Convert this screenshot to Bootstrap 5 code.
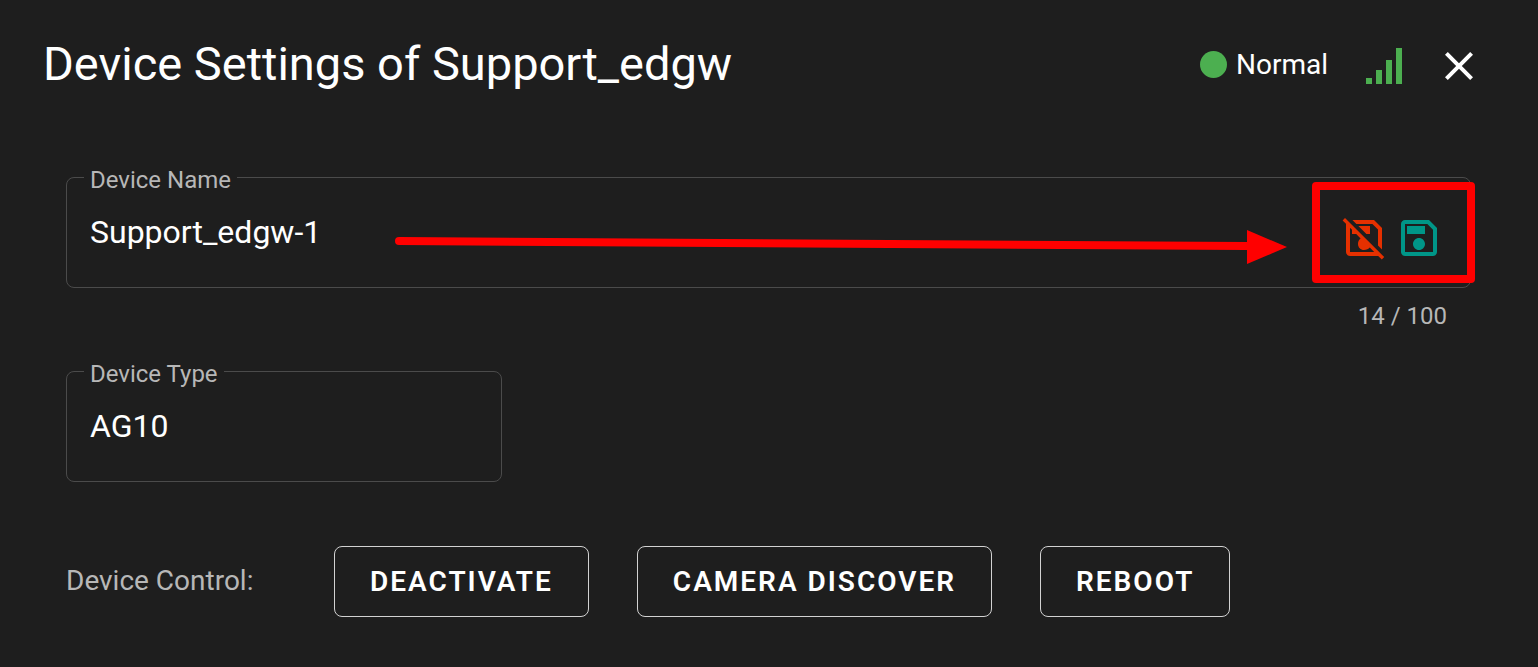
<!DOCTYPE html>
<html lang="en">
<head>
<meta charset="utf-8">
<meta name="viewport" content="width=device-width, initial-scale=1">
<title>Device Settings</title>
<link href="https://cdn.jsdelivr.net/npm/bootstrap@5.3.0/dist/css/bootstrap.min.css" rel="stylesheet">
<style>
  body { background: #1e1e1e; color: #fff; font-family: Roboto, sans-serif; }
  .settings-head { padding: 40px 55px 0 43px; }
  .settings-title { font-size: 47px; line-height: 48px; padding-bottom: 3px; }
  .status { font-size: 28px; line-height: 40px; gap: 9px; padding-bottom: 2px; }
  .status-dot { width: 27px; height: 27px; background: #4caf50; }
  .signal { margin-left: 38px; }
  .icon-btn { background: none; border: 0; padding: 0; line-height: 0; color: inherit; }
  .close-btn { margin-left: 32px; }
  .settings-body { padding: 86px 67px 48px 66px; }
  .field { height: 111px; border: 1px solid #4b4b4b; border-radius: 8px; }
  .field-label { top: -14px; left: 17px; padding: 0 6px; background: #1e1e1e; color: #b7b7b7; font-size: 24px; line-height: 32px; }
  .field-input, .field-input:focus { height: 109px; padding: 0 23px 2px; background: transparent; border: 0; color: #fff; font-size: 32px; line-height: 40px; box-shadow: none; }
  .counter { margin: 8px 24px 35px 0; color: #b7b7b7; font-size: 24px; line-height: 40px; }
  .arrow { left: 328px; right: 183px; top: 52px; height: 34px; pointer-events: none; }
  .arrow-shaft { height: 14px; margin-top: 6px; min-width: 0; overflow: visible; }
  .actions { top: 4px; right: -5px; height: 101px; padding: 10px 24px 0 20px; gap: 7px; border: 8px solid #f00; border-radius: 4px; }
  .discard { color: #e53000; }
  .save { color: #009688; }
  .controls { margin-top: 64px; gap: 48px; }
  .controls-label { width: 220px; color: #b7b7b7; font-size: 28px; line-height: 40px; padding-bottom: 2px; }
  .control-btn, .control-btn:hover { height: 71px; padding: 0 35px; border: 1px solid #d2d2d2; border-radius: 8px; color: #fff; font-size: 28px; font-weight: 600; letter-spacing: 2px; }
</style>
</head>
<body>
<header class="settings-head d-flex align-items-center">
  <h1 class="settings-title fw-normal mb-0 me-auto">Device Settings of Support_edgw</h1>
  <div class="status d-flex align-items-center"><span class="status-dot rounded-circle"></span><span>Normal</span></div>
  <svg class="signal" width="37" height="36" viewBox="0 0 37 36" fill="#4caf50" role="img" aria-label="Signal strength"><path d="M0 30h6v6H0zM10 22h6v14h-6zM20 12h6v24h-6zM30 0h6v36h-6z"/></svg>
  <button type="button" class="icon-btn close-btn" aria-label="Close"><svg width="48" height="48" viewBox="0 0 24 24" fill="currentColor"><path d="M19 6.41L17.59 5 12 10.59 6.41 5 5 6.41 10.59 12 5 17.59 6.41 19 12 13.41 17.59 19 19 17.59 13.41 12z"/></svg></button>
</header>

<main class="settings-body">
  <div class="field position-relative">
    <label class="field-label position-absolute" for="deviceName">Device Name</label>
    <input class="field-input form-control" id="deviceName" type="text" maxlength="100" value="Support_edgw-1">
    <div class="arrow position-absolute d-flex" aria-hidden="true">
      <svg class="arrow-shaft flex-grow-1 w-100" viewBox="0 0 852 14" preserveAspectRatio="none"><path d="M4 5L852 10" fill="none" stroke="#f00" stroke-width="8" stroke-linecap="round"/></svg>
      <svg class="flex-shrink-0" width="40" height="34" viewBox="0 0 40 34"><path d="M0 0L40 17 0 34z" fill="#f00"/></svg>
    </div>
    <div class="actions position-absolute d-flex align-items-center">
      <button type="button" class="icon-btn discard" aria-label="Discard changes"><svg width="48" height="48" viewBox="0 0 24 24" fill="currentColor"><path d="M8.2 5L6.2 3H17L21 7V17.8L19 15.8V7.8L16.2 5H8.2M15 10V6H9.2L13.2 10H15M22.1 21.5L20.9 22.7 19.1 21H5C3.9 21 3 20.1 3 19V4.9L1.3 3.2 2.5 2 22.1 21.5M17.1 19L14.9 16.8C14.3 17.5 13.2 18 12 18 10.3 18 9 16.7 9 15 9 13.8 9.5 12.7 10.3 12.2L8.1 10H6V7.9L5 6.9V19H17.1Z"/></svg></button>
      <button type="button" class="icon-btn save" aria-label="Save"><svg width="48" height="48" viewBox="0 0 24 24" fill="currentColor"><path d="M17 3H5C3.89 3 3 3.9 3 5V19C3 20.1 3.89 21 5 21H19C20.1 21 21 20.1 21 19V7L17 3M19 19H5V5H16.17L19 7.83V19M12 12C10.34 12 9 13.34 9 15S10.34 18 12 18 15 16.66 15 15 13.66 12 12 12M6 6H15V10H6V6Z"/></svg></button>
    </div>
  </div>
  <div class="counter text-end">14 / 100</div>

  <div class="row gx-5">
    <div class="col-4">
      <div class="field position-relative">
        <label class="field-label position-absolute" for="deviceType">Device Type</label>
        <input class="field-input form-control" id="deviceType" type="text" value="AG10" readonly>
      </div>
    </div>
  </div>

  <div class="controls d-flex align-items-center">
    <div class="controls-label flex-shrink-0">Device Control:</div>
    <button type="button" class="btn control-btn">DEACTIVATE</button>
    <button type="button" class="btn control-btn">CAMERA DISCOVER</button>
    <button type="button" class="btn control-btn">REBOOT</button>
  </div>
</main>
<script src="https://cdn.jsdelivr.net/npm/bootstrap@5.3.0/dist/js/bootstrap.bundle.min.js"></script>
</body>
</html>
